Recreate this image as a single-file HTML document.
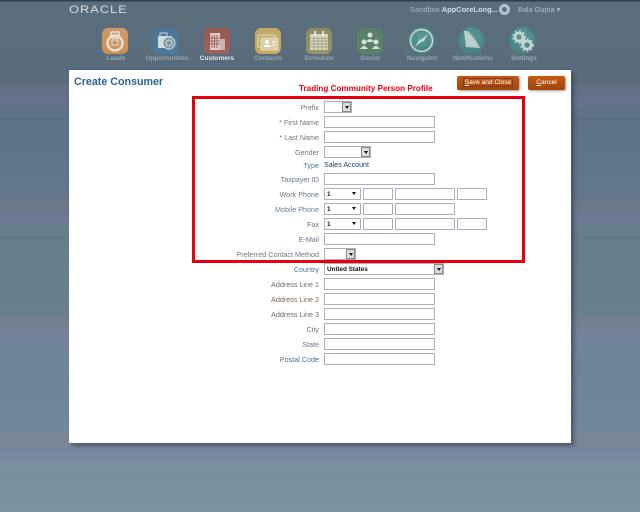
<!DOCTYPE html>
<html><head><meta charset="utf-8"><style>
html,body{margin:0;padding:0}
body{width:640px;height:512px;overflow:hidden;position:relative;font-family:"Liberation Sans",sans-serif;font-size:7.2px;
background:linear-gradient(180deg,#2c3f4d 0,#2c3f4d 1px,#5a6e7d 2px,#586c7b 82px,#60707f 83px,#63718a 96px,#65738c 105px,#5f7585 105.500px,#5d7282 118.500px,#56697a 119px,#5e7384 120px,#62788a 199px,#6b7786 200px,#6a7888 212px,#6b7992 213px,#6d7b94 224.500px,#66808e 225px,#657e8d 236.500px,#5e7585 237px,#667d8c 238px,#6a808f 316px,#737f8e 317px,#73808f 329px,#74819b 330px,#75829c 341.500px,#6f8797 342px,#6f8696 356.500px,#677d8d 357px,#6f8595 358px,#72889a 431px,#7a8595 432px,#7a8696 446px,#78879f 447px,#7a88a0 461.500px,#7a909f 462px,#7a8f9e 474.500px,#738897 475px,#7a909f 476px,#7b92a1 512px)}
.a{position:absolute}
.n{position:absolute;width:70px;text-align:center;top:54px;font-size:6.6px;line-height:10px;color:#93a6b1;font-weight:bold}
.i{position:absolute;top:28px;width:26px;height:26px;border-radius:6px}
.c{position:absolute;top:27px;width:27px;height:27px;border-radius:50%;background:radial-gradient(circle at 50% 40%,#5e9c98,#3e7a78)}
#panel{position:absolute;left:69px;top:69px;width:502px;height:374px;background:#fff;box-shadow:3px 3px 4px rgba(50,65,85,.65);border-top:1px solid #46607a;box-sizing:border-box}
.l{position:absolute;width:200px;left:119px;text-align:right;font-size:7.2px;color:#6a7782;line-height:13px}
.f{position:absolute;box-sizing:border-box;height:12px;border:1px solid #aeadc0;background:#fff}
.s{position:absolute;box-sizing:border-box;height:12px;border:1px solid #aeadc0;background:#fff;font-size:6.4px;font-weight:bold;line-height:11px;padding-left:2px;color:#111}
.s b{position:absolute;right:0;top:0;width:9px;height:10px;background:#dcdcdc;border:1px solid #8a8a8a;box-sizing:border-box}
.s b:after,.s i:after{content:"";position:absolute;left:2px;top:3px;border:2px solid transparent;border-top:3px solid #111}
.s i{position:absolute;right:1px;top:0;width:9px;height:10px}
.btn{position:absolute;top:76px;height:14px;border-radius:2px;background:linear-gradient(#c65a12,#a44208);box-shadow:1px 1px 2px rgba(0,0,0,.4);color:#fff;font-size:6.6px;text-align:center;line-height:14px}
svg{position:absolute;overflow:visible}
</style></head><body>
<div class="a" style="left:69px;top:3px;font-size:11px;line-height:14px;color:#d5dde2;letter-spacing:.9px;transform:scaleX(1.16);transform-origin:0 0">ORACLE</div>
<div class="a" style="left:410px;top:4px;font-size:7.500px;line-height:12px;color:#a9b8c2;white-space:nowrap">Sandbox <span style="color:#d5dde2;font-weight:bold">AppCoreLong...</span></div>
<div class="a" style="left:499px;top:4px;width:11px;height:11px;border-radius:50%;background:#b8c4cc"></div>
<div class="a" style="left:502px;top:7px;width:5px;height:5px;border-radius:50%;background:#5d7282"></div>
<div class="a" style="left:518px;top:4px;font-size:7.300px;line-height:12px;color:#b4c1ca;white-space:nowrap">Bala Gupta ▾</div>

<div class="i" style="left:102px;background:linear-gradient(#d09a66,#cc8f52)"></div>
<svg style="left:102px;top:28px" width="26" height="26"><circle cx="13" cy="15" r="7.500" fill="none" stroke="#e6e2da" stroke-width="2.500"/><rect x="9" y="4" width="8" height="6" rx="1" fill="none" stroke="#e6e2da" stroke-width="1.500"/><rect x="10" y="12" width="6" height="5" fill="none" stroke="#e6e2da"/></svg>
<div class="i" style="left:153px;background:linear-gradient(#4b7397,#4c7a9e)"></div>
<svg style="left:153px;top:28px" width="26" height="26"><rect x="5" y="8" width="14" height="12" rx="1" fill="#d5dada"/><rect x="7" y="5" width="7" height="4" fill="none" stroke="#d5dada"/><circle cx="16" cy="15" r="6" fill="#7c95a6" stroke="#d5dada"/><circle cx="16" cy="15" r="3" fill="none" stroke="#d5dada"/></svg>
<div class="i" style="left:204px;background:linear-gradient(#95574f,#a0615a)"></div>
<svg style="left:204px;top:28px" width="26" height="26"><rect x="6" y="5" width="10" height="17" fill="#dccfca"/><rect x="16" y="11" width="5" height="11" fill="#c9b5af"/><path d="M8 7v13M10.500 7v13M13 7v13M6 10h10M6 13h10M6 16h10" stroke="#a0615a" fill="none"/></svg>
<div class="i" style="left:255px;background:linear-gradient(#c2a966,#c7ab5b)"></div>
<svg style="left:255px;top:28px" width="26" height="26"><rect x="3" y="7" width="17" height="12" rx="1" fill="none" stroke="#e4dcc0"/><rect x="6" y="10" width="17" height="12" rx="1" fill="#d9cfa4" stroke="#e4dcc0"/><circle cx="12" cy="14" r="2" fill="#fff"/><rect x="9" y="17" width="6" height="2" fill="#fff"/><path d="M17 14h4M17 17h4" stroke="#fff"/></svg>
<div class="i" style="left:306px;background:linear-gradient(#8c8a62,#97946a)"></div>
<svg style="left:306px;top:28px" width="26" height="26"><rect x="4" y="6" width="18" height="16" rx="1" fill="#d8d6c6"/><path d="M9 3v5M17 3v5" stroke="#e8e6da" stroke-width="2"/><path d="M4 10h18M4 13h18M4 16h18M4 19h18M8 10v12M12 10v12M16 10v12M20 10v12" stroke="#97946a" stroke-width=".7"/></svg>
<div class="i" style="left:357px;background:linear-gradient(#5c7e67,#5a8468)"></div>
<svg style="left:357px;top:28px" width="26" height="26"><g fill="#d7e0d8"><circle cx="13" cy="7" r="2.500"/><path d="M9 14q4-6 8 0z"/><circle cx="7" cy="14" r="2.500"/><path d="M3 21q4-6 8 0z"/><circle cx="19" cy="14" r="2.500"/><path d="M15 21q4-6 8 0z"/></g></svg>
<div class="c" style="left:408px"></div>
<svg style="left:408px;top:27px" width="27" height="27"><circle cx="13.500" cy="13.500" r="11" fill="none" stroke="#cfdcd9" stroke-width="1.500"/><path d="M20 7l-5 8-2-2zM7 20l5-8 2 2z" fill="#d5e0dd"/></svg>
<div class="c" style="left:458px"></div>
<svg style="left:458px;top:27px" width="27" height="27"><path d="M6 4l4 0 8 10 4 7-14-1-1-8z" fill="#b8cfcb"/></svg>
<div class="c" style="left:509px"></div>
<svg style="left:509px;top:27px" width="27" height="27"><circle cx="10" cy="10" r="4" fill="none" stroke="#c9d8d5" stroke-width="2.500"/><circle cx="10" cy="10" r="6" fill="none" stroke="#c9d8d5" stroke-width="1.500" stroke-dasharray="2 2"/><circle cx="18" cy="18" r="4" fill="none" stroke="#c9d8d5" stroke-width="2.500"/><circle cx="18" cy="18" r="6" fill="none" stroke="#c9d8d5" stroke-width="1.500" stroke-dasharray="2 2"/></svg>

<div class="n" style="left:81px">Leads</div>
<div class="n" style="left:132px">Opportunities</div>
<div class="n" style="left:182px;color:#e4e9ec">Customers</div>
<div class="n" style="left:233px">Contacts</div>
<div class="n" style="left:284px">Schedule</div>
<div class="n" style="left:335px">Social</div>
<div class="n" style="left:387px">Navigator</div>
<div class="n" style="left:438px">Notifications</div>
<div class="n" style="left:489px">Settings</div>

<div id="panel"></div>
<div class="a" style="left:74px;top:75px;font-size:10.700px;line-height:14px;font-weight:bold;color:#2c6192;white-space:nowrap">Create Consumer</div>
<div class="a" style="left:299px;top:83px;font-size:8.150px;line-height:12px;font-weight:bold;color:#e8000f;white-space:nowrap">Trading Community Person Profile</div>
<div class="btn" style="left:457px;width:62px"><span style="outline:1px dotted #333;padding:0 1px"><u>S</u>ave and Close</span></div>
<div class="btn" style="left:528px;width:37px"><u>C</u>ancel</div>
<div class="a" style="left:192px;top:96px;width:333px;height:167px;box-sizing:border-box;border:3px solid #e6000f"></div>

<div class="l" style="top:101px">Prefix</div><div class="s" style="left:324px;top:101px;width:28px"><b></b></div>
<div class="l" style="top:116px"><span style="color:#4a7aa0">*</span> First Name</div><div class="f" style="left:324px;top:116px;width:111px"></div>
<div class="l" style="top:131px"><span style="color:#4a7aa0">*</span> Last Name</div><div class="f" style="left:324px;top:131px;width:111px"></div>
<div class="l" style="top:146px">Gender</div><div class="s" style="left:324px;top:146px;width:47px"><b></b></div>
<div class="l" style="top:159px;color:#4c7a9c">Type</div><div class="a" style="left:324px;top:159px;font-size:7.100px;line-height:13px;color:#143a5a;white-space:nowrap">Sales Account</div>
<div class="l" style="top:173px">Taxpayer ID</div><div class="f" style="left:324px;top:173px;width:111px"></div>
<div class="l" style="top:188px">Work Phone</div><div class="s" style="left:324px;top:188px;width:37px">1<i></i></div><div class="f" style="left:363px;top:188px;width:30px"></div><div class="f" style="left:395px;top:188px;width:60px"></div><div class="f" style="left:457px;top:188px;width:30px"></div>
<div class="l" style="top:203px;color:#6a7a8a">Mobile Phone</div><div class="s" style="left:324px;top:203px;width:37px">1<i></i></div><div class="f" style="left:363px;top:203px;width:30px"></div><div class="f" style="left:395px;top:203px;width:60px"></div>
<div class="l" style="top:218px">Fax</div><div class="s" style="left:324px;top:218px;width:37px">1<i></i></div><div class="f" style="left:363px;top:218px;width:30px"></div><div class="f" style="left:395px;top:218px;width:60px"></div><div class="f" style="left:457px;top:218px;width:30px"></div>
<div class="l" style="top:233px">E-Mail</div><div class="f" style="left:324px;top:233px;width:111px"></div>
<div class="l" style="top:248px">Preferred Contact Method</div><div class="s" style="left:324px;top:248px;width:32px"><b></b></div>
<div class="l" style="top:263px;color:#4a6f90">Country</div><div class="s" style="left:324px;top:263px;width:120px">United States<b></b></div>
<div class="l" style="top:278px;color:#6f6a6a">Address Line 1</div><div class="f" style="left:324px;top:278px;width:111px"></div>
<div class="l" style="top:293px;color:#7a6a5a">Address Line 2</div><div class="f" style="left:324px;top:293px;width:111px"></div>
<div class="l" style="top:308px;color:#6f6a6a">Address Line 3</div><div class="f" style="left:324px;top:308px;width:111px"></div>
<div class="l" style="top:323px">City</div><div class="f" style="left:324px;top:323px;width:111px"></div>
<div class="l" style="top:338px">State</div><div class="f" style="left:324px;top:338px;width:111px"></div>
<div class="l" style="top:353px;color:#4a6f90">Postal Code</div><div class="f" style="left:324px;top:353px;width:111px"></div>
</body></html>
